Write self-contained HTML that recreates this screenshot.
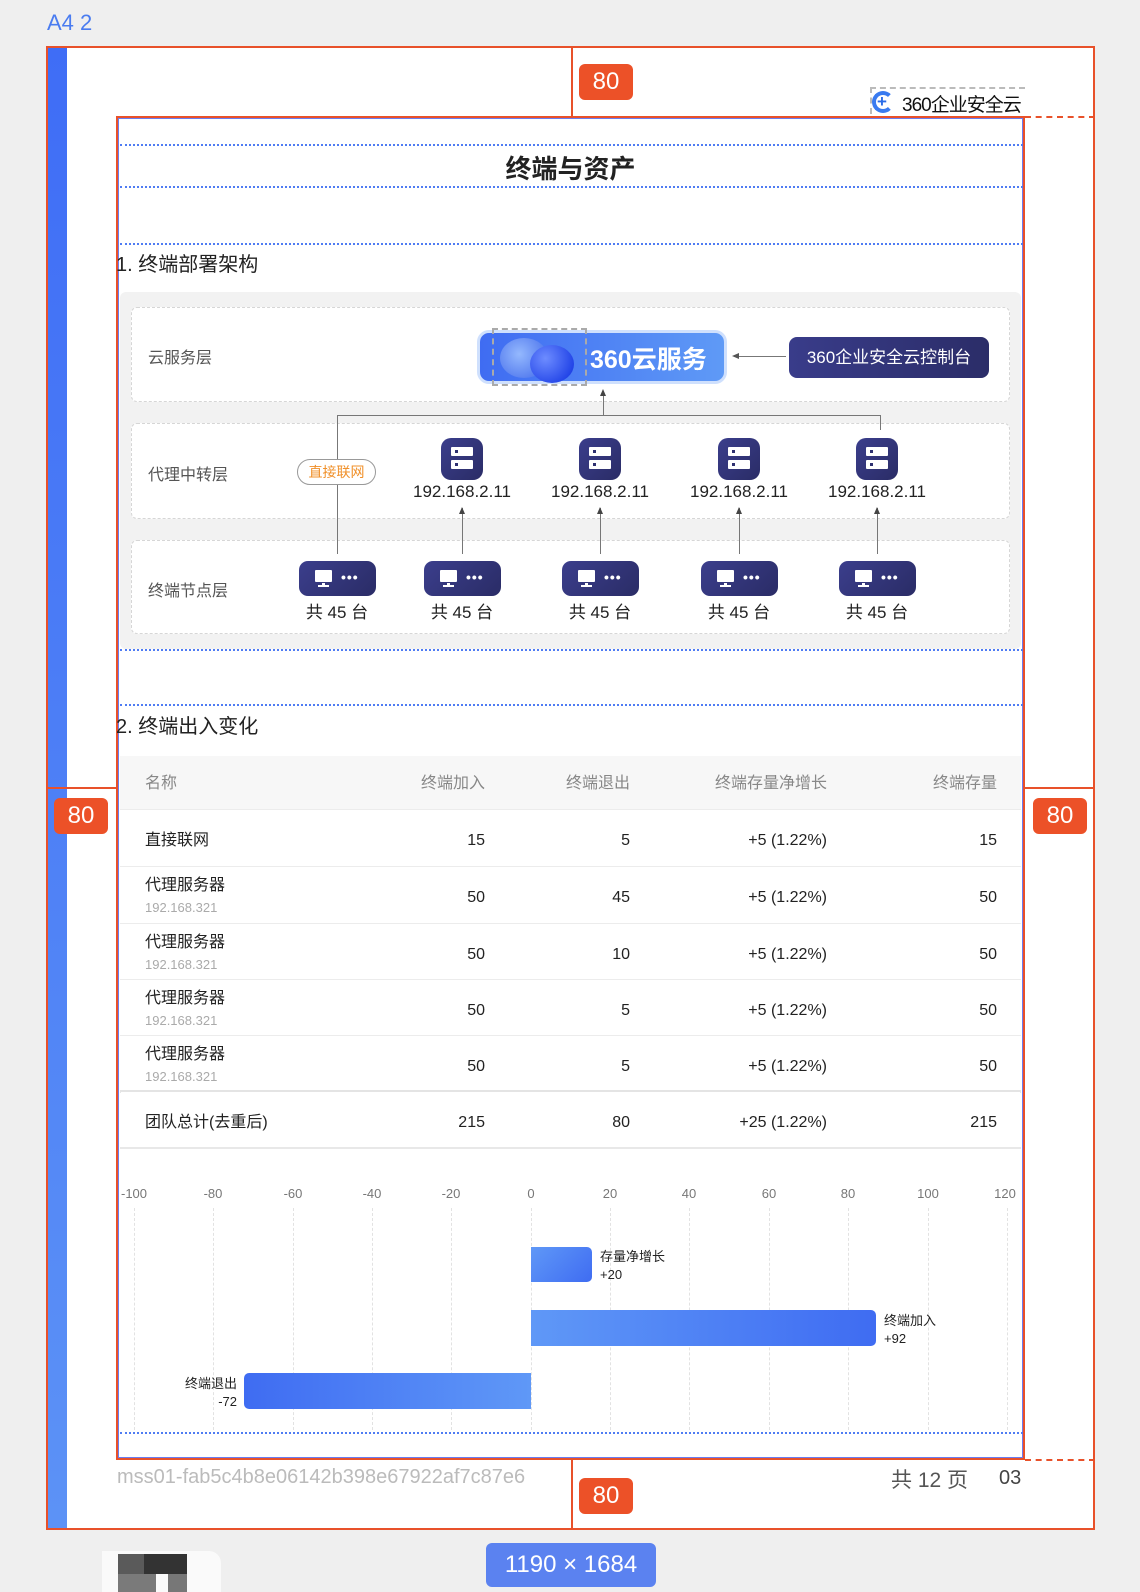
<!DOCTYPE html>
<html><head><meta charset="utf-8">
<style>
*{margin:0;padding:0;box-sizing:border-box}
body{width:1140px;height:1592px;background:#efefef;position:relative;overflow:hidden;font-family:"Liberation Sans","Noto Sans CJK SC",sans-serif;color:#222}
.a{position:absolute}
.badge{position:absolute;background:#ec5128;color:#fff;font-size:24px;border-radius:6px;width:54px;height:36px;line-height:36px;text-align:center}
.dash{position:absolute;left:120px;width:903px;border-top:2px dotted #4f7cf3;height:0}
.layer{position:absolute;left:131px;width:879px;background:#fff;border:1px dashed #d6d6d6;border-radius:6px}
.lbl{position:absolute;left:148px;font-size:16px;color:#555}
.srv{position:absolute;width:42px;height:42px;border-radius:10px;background:linear-gradient(135deg,#3b3e8c,#2a2c66)}
.srv i{position:absolute;left:10px;width:22px;height:9px;background:#fff;border-radius:1px}
.srv i:after{content:"";position:absolute;left:4px;top:3px;width:3px;height:3px;background:#2e3070}
.ip{position:absolute;width:120px;text-align:center;font-size:17px;color:#222}
.term{position:absolute;width:77px;height:35px;border-radius:9px;background:linear-gradient(135deg,#3b3e8c,#2a2c66)}
.term .m{position:absolute;left:16px;top:9px;width:17px;height:12px;background:#fff;border-radius:1px}
.term .m:after{content:"";position:absolute;left:7px;top:13px;width:3px;height:3px;background:#fff}
.term .m:before{content:"";position:absolute;left:3px;top:15px;width:11px;height:2px;background:#fff}
.term .d{position:absolute;left:42px;top:11px;color:#fff;font-size:14px;letter-spacing:1px;font-weight:bold;line-height:10px}
.cnt{position:absolute;width:100px;text-align:center;font-size:17px}
.vl{position:absolute;width:1px;background:#777}
.hl{position:absolute;height:1px;background:#777}
.up{position:absolute;width:0;height:0;border-left:3px solid transparent;border-right:3px solid transparent;border-bottom:7px solid #444}
.row{position:absolute;left:120px;width:901px;border-bottom:1px solid #ececec;background:#fff}
.c{position:absolute;font-size:16px;line-height:20px;top:0}
.r{text-align:right}
.grid{position:absolute;top:1208px;height:222px;border-left:1px dashed #e2e2e2;width:0}
.ax{position:absolute;top:1186px;font-size:13px;color:#777;width:40px;text-align:center;margin-left:-20px}
.bl{position:absolute;font-size:13px;color:#222;line-height:18px}
</style></head><body>
<div class="a" style="left:47px;top:10px;font-size:22px;color:#4a7cf0">A4 2</div>
<div class="a" style="left:46px;top:46px;width:1049px;height:1484px;background:#fff;border:2px solid #e8512a"></div>
<div class="a" style="left:48px;top:48px;width:19px;height:1480px;background:linear-gradient(180deg,#3f6df6,#5c92f6)"></div>
<div class="a" style="left:571px;top:46px;width:2px;height:70px;background:#e8512a"></div>
<div class="a" style="left:571px;top:1460px;width:2px;height:70px;background:#e8512a"></div>
<div class="a" style="left:46px;top:787px;width:70px;height:2px;background:#e8512a"></div>
<div class="a" style="left:1025px;top:787px;width:70px;height:2px;background:#e8512a"></div>
<div class="a" style="left:1025px;top:116px;width:70px;border-top:2px dashed #e8512a"></div>
<div class="a" style="left:1025px;top:1459px;width:70px;border-top:2px dashed #e8512a"></div>
<div class="badge" style="left:579px;top:64px">80</div>
<div class="badge" style="left:579px;top:1478px">80</div>
<div class="badge" style="left:54px;top:798px">80</div>
<div class="badge" style="left:1033px;top:798px">80</div>
<div class="a" style="left:870px;top:87px;width:155px;height:27px;border-top:2px dashed #bbb;border-left:2px dashed #bbb"></div>
<div class="a" style="left:872px;top:91px;width:22px;height:22px;border-radius:50%;border:4px solid #3a7bf0;border-right-color:#fff"></div>
<div class="a" style="left:877px;top:92px;font-size:17px;font-weight:bold;color:#2a6ce8">+</div>
<div class="a" style="left:902px;top:90px;font-size:19px;color:#111;letter-spacing:-1px">360企业安全云</div>
<div class="a" style="left:116px;top:116px;width:909px;height:1344px;border:2px solid #e8512a;box-shadow:inset 0 0 0 1px #6b7cf0"></div>
<div class="dash" style="top:144px"></div>
<div class="a" style="left:116px;width:909px;top:149px;text-align:center;font-size:26px;font-weight:bold">终端与资产</div>
<div class="dash" style="top:186px"></div>
<div class="dash" style="top:243px"></div>
<div class="a" style="left:116px;top:248px;font-size:20px">1. 终端部署架构</div>
<div class="a" style="left:120px;top:292px;width:901px;height:357px;background:#f2f2f2;border-radius:6px"></div>
<div class="layer" style="top:307px;height:95px"></div>
<div class="layer" style="top:423px;height:96px"></div>
<div class="layer" style="top:540px;height:94px"></div>
<div class="lbl" style="top:344px">云服务层</div>
<div class="lbl" style="top:461px">代理中转层</div>
<div class="lbl" style="top:577px">终端节点层</div>
<div class="a" style="left:477px;top:330px;width:250px;height:54px;border-radius:12px;background:linear-gradient(90deg,#3f6cf2,#5f9af6);border:3px solid #cfe0fd"></div>
<div class="a" style="left:492px;top:328px;width:95px;height:58px;border:2px dashed #aaa"></div>
<div class="a" style="left:500px;top:338px;width:48px;height:40px;border-radius:50%;background:radial-gradient(circle at 40% 40%,#9dc0ff,#3b63e8);opacity:.9"></div>
<div class="a" style="left:530px;top:345px;width:44px;height:38px;border-radius:50%;background:radial-gradient(circle at 35% 35%,#6d8cff,#0b2ee0)"></div>
<div class="a" style="left:590px;top:340px;font-size:25px;font-weight:bold;color:#fff">360云服务</div>
<div class="hl" style="left:734px;top:356px;width:52px"></div>
<div class="a" style="left:732px;top:353px;border-top:3px solid transparent;border-bottom:3px solid transparent;border-right:7px solid #555"></div>
<div class="a" style="left:789px;top:337px;width:200px;height:41px;border-radius:8px;background:linear-gradient(90deg,#393c8a,#2b2d68);color:#fff;font-size:17px;line-height:41px;text-align:center">360企业安全云控制台</div>
<div class="vl" style="left:603px;top:392px;height:23px"></div>
<div class="up" style="left:600px;top:389px"></div>
<div class="hl" style="left:337px;top:415px;width:544px"></div>
<div class="vl" style="left:880px;top:415px;height:15px"></div>
<div class="vl" style="left:337px;top:415px;height:139px"></div>
<div class="a" style="left:297px;top:459px;width:79px;height:26px;border:1px solid #999;border-radius:13px;background:#fff;color:#f0902a;font-size:14px;line-height:24px;text-align:center">直接联网</div>
<div class="srv" style="left:441px;top:438px"><i style="top:9px"></i><i style="top:22px"></i></div>
<div class="srv" style="left:579px;top:438px"><i style="top:9px"></i><i style="top:22px"></i></div>
<div class="srv" style="left:718px;top:438px"><i style="top:9px"></i><i style="top:22px"></i></div>
<div class="srv" style="left:856px;top:438px"><i style="top:9px"></i><i style="top:22px"></i></div>
<div class="ip" style="left:402px;top:482px">192.168.2.11</div>
<div class="ip" style="left:540px;top:482px">192.168.2.11</div>
<div class="ip" style="left:679px;top:482px">192.168.2.11</div>
<div class="ip" style="left:817px;top:482px">192.168.2.11</div>
<div class="vl" style="left:462px;top:508px;height:46px"></div><div class="up" style="left:459px;top:507px"></div>
<div class="vl" style="left:600px;top:508px;height:46px"></div><div class="up" style="left:597px;top:507px"></div>
<div class="vl" style="left:739px;top:508px;height:46px"></div><div class="up" style="left:736px;top:507px"></div>
<div class="vl" style="left:877px;top:508px;height:46px"></div><div class="up" style="left:874px;top:507px"></div>
<div class="term" style="left:299px;top:561px"><div class="m"></div><div class="d">•••</div></div>
<div class="term" style="left:424px;top:561px"><div class="m"></div><div class="d">•••</div></div>
<div class="term" style="left:562px;top:561px"><div class="m"></div><div class="d">•••</div></div>
<div class="term" style="left:701px;top:561px"><div class="m"></div><div class="d">•••</div></div>
<div class="term" style="left:839px;top:561px"><div class="m"></div><div class="d">•••</div></div>
<div class="cnt" style="left:287px;top:598px">共 45 台</div>
<div class="cnt" style="left:412px;top:598px">共 45 台</div>
<div class="cnt" style="left:550px;top:598px">共 45 台</div>
<div class="cnt" style="left:689px;top:598px">共 45 台</div>
<div class="cnt" style="left:827px;top:598px">共 45 台</div>
<div class="dash" style="top:649px"></div>
<div class="dash" style="top:704px"></div>
<div class="a" style="left:116px;top:710px;font-size:20px">2. 终端出入变化</div>
<div class="a" style="left:120px;top:756px;width:901px;height:393px;border:1px solid #e6e6e6;border-radius:4px;background:#fff"></div>
<div class="row" style="top:756px;height:54px;background:#f7f7f7">
 <div class="c" style="left:25px;top:18px;color:#888">名称</div>
 <div class="c r" style="right:536px;top:18px;color:#888">终端加入</div>
 <div class="c r" style="right:391px;top:18px;color:#888">终端退出</div>
 <div class="c r" style="right:194px;top:18px;color:#888">终端存量净增长</div>
 <div class="c r" style="right:24px;top:18px;color:#888">终端存量</div>
</div>
<div class="row" style="top:810px;height:57px">
 <div class="c" style="left:25px;top:21px">直接联网</div>
 <div class="c r" style="right:536px;top:21px">15</div><div class="c r" style="right:391px;top:21px">5</div>
 <div class="c r" style="right:194px;top:21px">+5 (1.22%)</div><div class="c r" style="right:24px;top:21px">15</div>
</div>
<div class="row" style="top:867px;height:57px">
 <div class="c" style="left:25px;top:9px">代理服务器</div><div class="c" style="left:25px;top:31px;font-size:13px;color:#aaa">192.168.321</div>
 <div class="c r" style="right:536px;top:21px">50</div><div class="c r" style="right:391px;top:21px">45</div>
 <div class="c r" style="right:194px;top:21px">+5 (1.22%)</div><div class="c r" style="right:24px;top:21px">50</div>
</div>
<div class="row" style="top:924px;height:56px">
 <div class="c" style="left:25px;top:9px">代理服务器</div><div class="c" style="left:25px;top:31px;font-size:13px;color:#aaa">192.168.321</div>
 <div class="c r" style="right:536px;top:21px">50</div><div class="c r" style="right:391px;top:21px">10</div>
 <div class="c r" style="right:194px;top:21px">+5 (1.22%)</div><div class="c r" style="right:24px;top:21px">50</div>
</div>
<div class="row" style="top:980px;height:56px">
 <div class="c" style="left:25px;top:9px">代理服务器</div><div class="c" style="left:25px;top:31px;font-size:13px;color:#aaa">192.168.321</div>
 <div class="c r" style="right:536px;top:21px">50</div><div class="c r" style="right:391px;top:21px">5</div>
 <div class="c r" style="right:194px;top:21px">+5 (1.22%)</div><div class="c r" style="right:24px;top:21px">50</div>
</div>
<div class="row" style="top:1036px;height:56px;border-bottom:2px solid #e4e4e4">
 <div class="c" style="left:25px;top:9px">代理服务器</div><div class="c" style="left:25px;top:31px;font-size:13px;color:#aaa">192.168.321</div>
 <div class="c r" style="right:536px;top:21px">50</div><div class="c r" style="right:391px;top:21px">5</div>
 <div class="c r" style="right:194px;top:21px">+5 (1.22%)</div><div class="c r" style="right:24px;top:21px">50</div>
</div>
<div class="row" style="top:1093px;height:56px;border-bottom:2px solid #e8e8e8">
 <div class="c" style="left:25px;top:20px">团队总计(去重后)</div>
 <div class="c r" style="right:536px;top:20px">215</div><div class="c r" style="right:391px;top:20px">80</div>
 <div class="c r" style="right:194px;top:20px">+25 (1.22%)</div><div class="c r" style="right:24px;top:20px">215</div>
</div>
<div class="ax" style="left:134px">-100</div><div class="grid" style="left:134px"></div>
<div class="ax" style="left:213px">-80</div><div class="grid" style="left:213px"></div>
<div class="ax" style="left:293px">-60</div><div class="grid" style="left:293px"></div>
<div class="ax" style="left:372px">-40</div><div class="grid" style="left:372px"></div>
<div class="ax" style="left:451px">-20</div><div class="grid" style="left:451px"></div>
<div class="ax" style="left:531px">0</div><div class="grid" style="left:531px"></div>
<div class="ax" style="left:610px">20</div><div class="grid" style="left:610px"></div>
<div class="ax" style="left:689px">40</div><div class="grid" style="left:689px"></div>
<div class="ax" style="left:769px">60</div><div class="grid" style="left:769px"></div>
<div class="ax" style="left:848px">80</div><div class="grid" style="left:848px"></div>
<div class="ax" style="left:928px">100</div><div class="grid" style="left:928px"></div>
<div class="ax" style="left:1005px">120</div><div class="grid" style="left:1007px"></div>
<div class="a" style="left:531px;top:1247px;width:61px;height:35px;border-radius:0 5px 5px 0;background:linear-gradient(135deg,#5f98f7,#3f6cf2)"></div>
<div class="bl" style="left:600px;top:1248px">存量净增长<br>+20</div>
<div class="a" style="left:531px;top:1310px;width:345px;height:36px;border-radius:0 5px 5px 0;background:linear-gradient(90deg,#5f98f7,#3f6cf2)"></div>
<div class="bl" style="left:884px;top:1312px">终端加入<br>+92</div>
<div class="a" style="left:244px;top:1373px;width:287px;height:36px;border-radius:5px 0 0 5px;background:linear-gradient(90deg,#3f6cf2,#5f98f7)"></div>
<div class="bl" style="left:160px;top:1375px;width:77px;text-align:right">终端退出<br>-72</div>
<div class="dash" style="top:1432px"></div>
<div class="a" style="left:117px;top:1466px;font-size:20px;color:#bbb">mss01-fab5c4b8e06142b398e67922af7c87e6</div>
<div class="a" style="left:891px;top:1464px;font-size:21px;color:#555">共 12 页</div>
<div class="a" style="left:999px;top:1467px;font-size:20px;color:#444">03</div>
<div class="a" style="left:486px;top:1543px;width:170px;height:44px;border-radius:6px;background:#5b82f0;color:#fff;font-size:24px;line-height:44px;text-align:center">1190 × 1684</div>
<div class="a" style="left:102px;top:1551px;width:119px;height:41px;background:#fafafa;border-radius:0 12px 0 0"></div>
<div class="a" style="left:118px;top:1554px;width:26px;height:20px;background:#5a5a5a"></div>
<div class="a" style="left:144px;top:1554px;width:43px;height:20px;background:#333"></div>
<div class="a" style="left:118px;top:1574px;width:38px;height:18px;background:#7a7a7a"></div>
<div class="a" style="left:168px;top:1574px;width:19px;height:18px;background:#777"></div>
</body></html>
